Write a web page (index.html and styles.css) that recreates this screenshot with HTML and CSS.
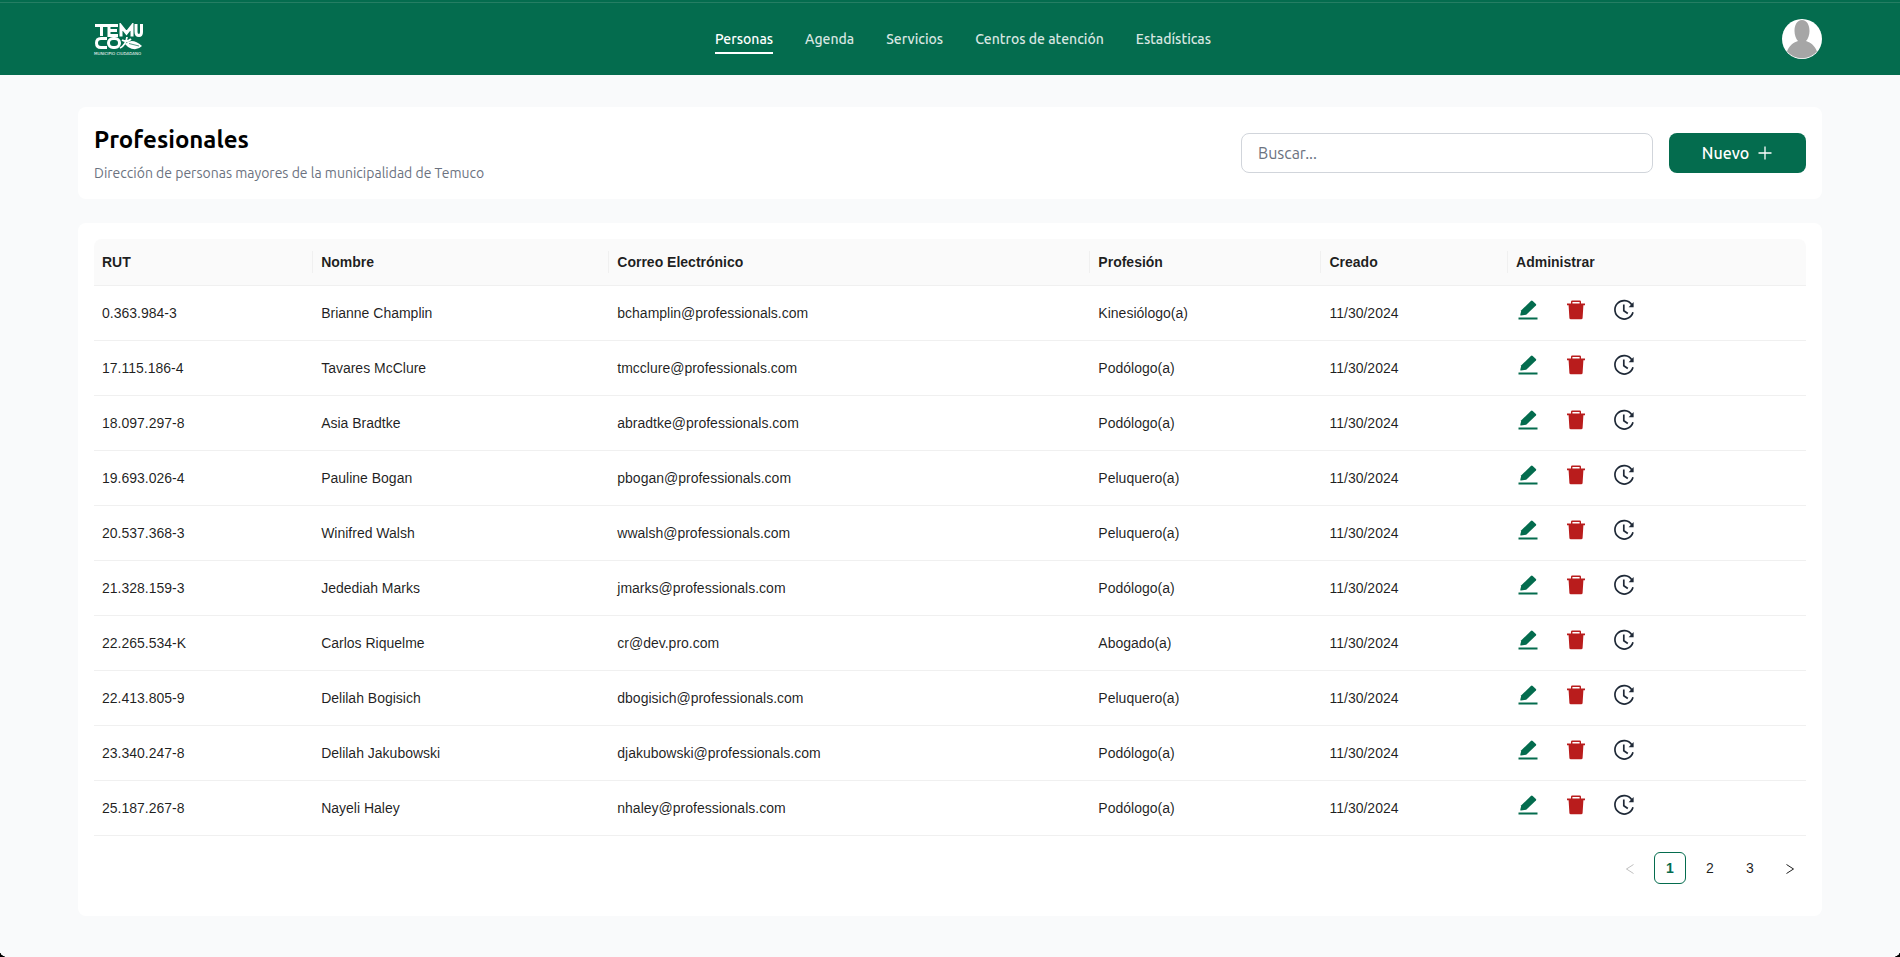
FILE: index.html
```html
<!DOCTYPE html>
<html lang="es">
<head>
<meta charset="utf-8">
<title>Profesionales</title>
<link rel="stylesheet" href="styles.css">
</head>
<body>
<svg class="sprite" aria-hidden="true">
  <symbol id="edit" viewBox="0 0 24 24"><path d="M5.300 12.300L14.900 2.900Q15.800 2.100 16.700 2.900L19.900 6Q20.600 6.800 19.900 7.500L10.200 16.800L5 17.500Q4.200 17.600 4.300 16.800Z" fill="currentColor"/><rect x="2.500" y="19.500" width="19" height="2" fill="currentColor"/></symbol>
  <symbol id="trash" viewBox="0 0 24 24"><path d="M3 5.500h4V3.800q0-1.300 1.300-1.300h7.400q1.300 0 1.300 1.300v1.700h4v1.800h-1.600l-.8 12.700q-.1 1.300-1.400 1.300H6.800q-1.300 0-1.400-1.300L4.600 7.300H3zM8.400 3.900v1.600h7.200V3.900z" fill="currentColor" fill-rule="evenodd"/></symbol>
  <symbol id="history" viewBox="0 0 24 24"><path d="M19.800 6.700A9.200 9.200 0 1 0 21 14.200" fill="none" stroke="currentColor" stroke-width="1.700"/><path d="M21.600 4v5.200h-5z" fill="currentColor"/><path d="M11.800 6.500V12.700L15.800 15.500" fill="none" stroke="currentColor" stroke-width="1.700"/></symbol>
</svg>
<header class="topbar">
  <a class="brand" href="#" aria-label="Temuco, Municipio Ciudadano">
    <svg class="logo" viewBox="0 0 50 28" fill="none" stroke="#fff" stroke-width="3">
      <path d="M1 2.500H15M7.500 2.500V13M24 2.500H15V12.500H24M15 7.500H23M27 13.500V3L32.500 10L38 3V13.500M42 1V9Q42 12.500 45 12.500Q47.500 12.500 47.500 9V1"/>
      <path d="M13 15.500H7Q2.500 15.500 2.500 20Q2.500 24.500 7 24.500H13"/><rect x="14.500" y="15.500" width="11" height="9" rx="4.500"/>
      <path d="M26 25Q32 22 33 14M28 17Q33 20 37 16" stroke-width="1.800"/><path d="M31 21Q38 14 48 23Q42 29 34 24Z" fill="#fff" stroke="none"/><path d="M35 20.500L45 23" stroke="#046c4e" stroke-width=".7"/>
    </svg>
    <span class="motto">MUNICIPIO CIUDADANO</span>
  </a>
  <nav class="nav">
    <a class="active" href="#">Personas</a><a href="#">Agenda</a><a href="#">Servicios</a><a href="#">Centros de atención</a><a href="#">Estadísticas</a>
  </nav>
  <button class="avatar" aria-label="Cuenta"><svg viewBox="0 0 40 40"><circle cx="20" cy="20" r="20" fill="#fff"/><path d="M20 1C25 1 27.500 6 27.500 12C27.500 16 26 20 24 22C29 23.500 33 27 35 32.500A20 20 0 0 1 5 32.500C7 27 11 23.500 16 22C14 20 12.500 16 12.500 12C12.500 6 15 1 20 1Z" fill="#a6a6a6"/></svg></button>
</header>
<main class="page">
  <section class="card heading">
    <div><h1>Profesionales</h1><p>Dirección de personas mayores de la municipalidad de Temuco</p></div>
    <div class="tools">
      <input class="search" type="search" placeholder="Buscar..." aria-label="Buscar">
      <button class="new">Nuevo <svg viewBox="0 0 16 16"><path d="M8 1.500v13M1.500 8h13" stroke="currentColor" stroke-width="1.300"/></svg></button>
    </div>
  </section>
  <section class="card">
    <table>
      <colgroup><col class="c-rut"><col class="c-name"><col class="c-mail"><col class="c-job"><col class="c-date"><col></colgroup>
      <thead><tr><th>RUT</th><th>Nombre</th><th>Correo Electrónico</th><th>Profesión</th><th>Creado</th><th>Administrar</th></tr></thead>
      <tbody id="rows"></tbody>
    </table>
    <nav class="pager" aria-label="Paginación">
      <button disabled aria-label="Anterior"><svg viewBox="0 0 12 12"><path d="M9.500 1.500L2.500 6l7 4.500"/></svg></button>
      <button class="current">1</button><button>2</button><button>3</button>
      <button aria-label="Siguiente"><svg viewBox="0 0 12 12"><path d="M2.500 1.500L9.500 6l-7 4.500"/></svg></button>
    </nav>
  </section>
</main>
<i class="corner left"></i><i class="corner right"></i>
<script src="app.js"></script>
</body>
</html>
```
FILE: styles.css
```css
* { box-sizing: border-box; }
body { margin: 0; min-height: 100vh; background: #f9fafb; color: rgba(0,0,0,.88); font-family: "Liberation Sans", Arial, sans-serif; font-size: 14px; line-height: 22px; }
button { font: inherit; cursor: pointer; }
.sprite { position: absolute; width: 0; height: 0; }
.topbar { height: 75px; padding: 3px 78px 0 94px; display: flex; justify-content: space-between; align-items: center; background: linear-gradient(#046c4e 2px, #257e63 2px, #257e63 3px, #046c4e 3px); font-family: Ubuntu, "Noto Sans", sans-serif; }
.brand { display: flex; flex-direction: column; width: 50px; color: #fff; text-decoration: none; }
.logo { width: 50px; height: 28px; display: block; }
.motto { font: 4px/5px "DejaVu Sans", sans-serif; white-space: nowrap; }
.nav { display: flex; gap: 32px; }
.nav a { color: #d8e6e1; text-decoration: none; font-size: 14px; font-weight: 500; line-height: 26px; padding-top: 2px; border-bottom: 2px solid transparent; }
.nav .active { color: #fff; border-color: #fff; }
.avatar { width: 40px; height: 40px; padding: 0; border: 0; border-radius: 50%; background: none; }
.avatar svg { display: block; }
.page { padding: 32px 78px; display: flex; flex-direction: column; gap: 24px; }
.card { background: #fff; border-radius: 8px; padding: 16px; }
.heading { display: flex; justify-content: space-between; align-items: center; font-family: Ubuntu, "Noto Sans", sans-serif; }
h1 { margin: 0 0 6px; font-size: 24px; line-height: 34px; font-weight: 600; color: #000; }
p { margin: 0; font-size: 14px; line-height: 20px; font-weight: 400; color: #6b7280; }
.tools { display: flex; gap: 16px; }
.search { width: 412px; height: 40px; padding: 0 16px; border: 1px solid #d1d5db; border-radius: 8px; font: 400 16px/24px Ubuntu, "Noto Sans", sans-serif; appearance: none; }
.search::placeholder { color: #6b7280; }
.new { width: 137px; height: 40px; border: 0; border-radius: 8px; background: #046c4e; color: #fff; font-size: 16px; font-weight: 500; display: flex; align-items: center; justify-content: center; gap: 8px; }
.new svg { width: 16px; height: 16px; }
table { width: 100%; table-layout: fixed; border-collapse: separate; border-spacing: 0; }
.c-rut { width: 12.8%; } .c-name { width: 17.3%; } .c-mail { width: 28.1%; } .c-job { width: 13.5%; } .c-date { width: 10.9%; }
th, td { border-bottom: 1px solid #f0f0f0; text-align: left; }
th { padding: 12px 8px; background: linear-gradient(#f0f0f0, #f0f0f0) right center / 1px 22px no-repeat #fafafa; font-weight: 700; }
th:first-child { border-top-left-radius: 8px; }
th:last-child { border-top-right-radius: 8px; background: #fafafa; }
td { padding: 16px 8px; }
td.admin { padding: 12px 8px 18px; }
.actions { display: flex; gap: 24px; }
.actions button { width: 24px; height: 24px; padding: 0; border: 0; background: none; }
.actions svg { width: 24px; height: 24px; display: block; }
.edit { color: #046c4e; } .delete { color: #b91c1c; } .history { color: #1f2937; }
.pager { display: flex; justify-content: flex-end; gap: 8px; margin: 16px 0; }
.pager button { width: 32px; height: 32px; padding: 0; border: 1px solid transparent; border-radius: 6px; background: none; color: rgba(0,0,0,.88); }
.pager .current { border-color: #046c4e; color: #046c4e; font-weight: 700; }
.pager button:disabled { color: rgba(0,0,0,.25); }
.pager svg { width: 12px; height: 12px; vertical-align: -2px; fill: none; stroke: currentColor; }
.corner { position: fixed; bottom: 0; width: 8px; height: 6px; }
.left { left: 0; background: radial-gradient(ellipse at top right, transparent 70%, #000 73%); }
.right { right: 0; background: radial-gradient(ellipse at top left, transparent 70%, #000 73%); }
```
FILE: app.js
```js
const people = [
  ["0.363.984-3", "Brianne Champlin", "bchamplin@professionals.com", "Kinesiólogo(a)"],
  ["17.115.186-4", "Tavares McClure", "tmcclure@professionals.com", "Podólogo(a)"],
  ["18.097.297-8", "Asia Bradtke", "abradtke@professionals.com", "Podólogo(a)"],
  ["19.693.026-4", "Pauline Bogan", "pbogan@professionals.com", "Peluquero(a)"],
  ["20.537.368-3", "Winifred Walsh", "wwalsh@professionals.com", "Peluquero(a)"],
  ["21.328.159-3", "Jedediah Marks", "jmarks@professionals.com", "Podólogo(a)"],
  ["22.265.534-K", "Carlos Riquelme", "cr@dev.pro.com", "Abogado(a)"],
  ["22.413.805-9", "Delilah Bogisich", "dbogisich@professionals.com", "Peluquero(a)"],
  ["23.340.247-8", "Delilah Jakubowski", "djakubowski@professionals.com", "Podólogo(a)"],
  ["25.187.267-8", "Nayeli Haley", "nhaley@professionals.com", "Podólogo(a)"]
];
const action = (cls, icon, label) => `<button class="${cls}" aria-label="${label}"><svg><use href="#${icon}"/></svg></button>`;
document.getElementById("rows").innerHTML = people.map(p =>
  `<tr>${[...p, "11/30/2024"].map(v => `<td>${v}</td>`).join("")}<td class="admin"><div class="actions">${action("edit", "edit", "Editar")}${action("delete", "trash", "Eliminar")}${action("history", "history", "Historial")}</div></td></tr>`
).join("");
```
